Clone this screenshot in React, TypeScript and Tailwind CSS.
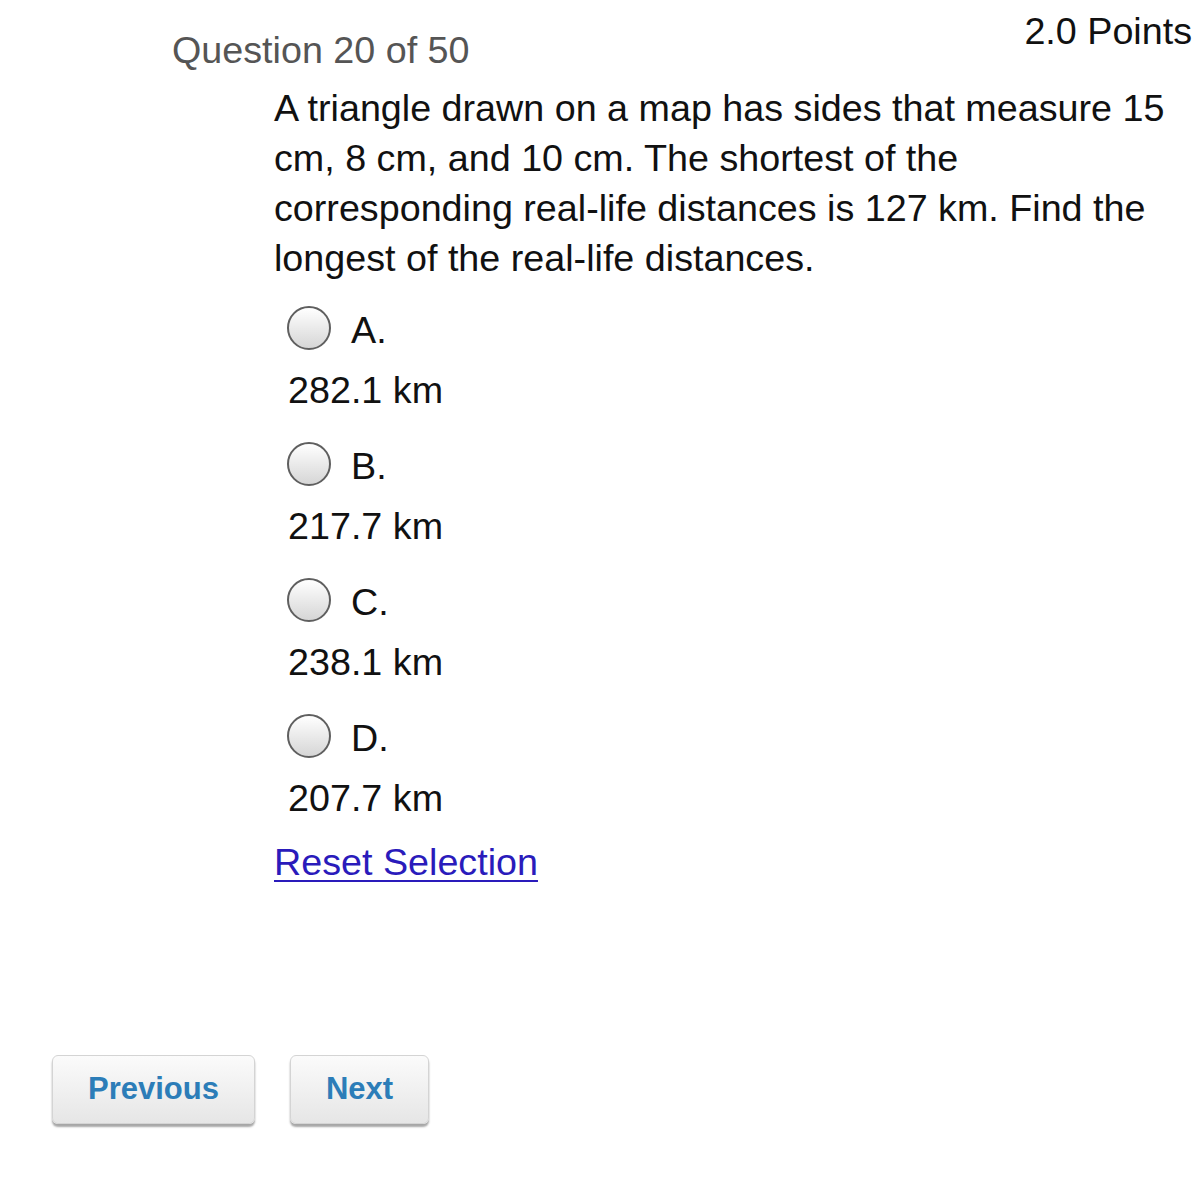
import React from "react";

const options = [
  { letter: "A.", value: "282.1 km" },
  { letter: "B.", value: "217.7 km" },
  { letter: "C.", value: "238.1 km" },
  { letter: "D.", value: "207.7 km" },
];

const Radio = () => (
  <span className="w-[44px] h-[44px] rounded-full border-2 border-[#5f5f5f] bg-gradient-to-b from-white to-[#d6d6d6] shrink-0" />
);

const NavButton = ({ label, width }: { label: string; width: string }) => (
  <button
    className={`${width} h-[69px] rounded-[6px] border border-[#d4d4d4] bg-gradient-to-b from-[#fbfbfb] to-[#e6e6e6] shadow-[0_3px_2px_rgba(0,0,0,0.35)] text-[31px] font-bold text-[#2c7db8] flex items-center justify-center`}
  >
    {label}
  </button>
);

const App = () => {
  return (
    <div
      className="w-[1198px] min-h-[1200px] bg-white text-[#111] text-[37.7px]"
      style={{ fontFamily: '"Liberation Sans", Arial, sans-serif' }}
    >
      {/* Header */}
      <div className="flex justify-between items-start">
        <div className="pl-[172px] pt-[25px] leading-[50px] text-[#555]">
          Question 20 of 50
        </div>
        <div className="pr-[6px] pt-[6px] leading-[50px]">2.0 Points</div>
      </div>

      {/* Question body */}
      <div className="pl-[274px] pr-[20px] mt-[8px]">
        <p className="leading-[50px]">
          A triangle drawn on a map has sides that measure 15 cm, 8 cm, and 10
          cm. The shortest of the corresponding real-life distances is 127 km.
          Find the longest of the real-life distances.
        </p>

        <div className="flex flex-col gap-[27px] mt-[23px] pl-[13px]">
          {options.map((o) => (
            <div key={o.letter} className="flex flex-col">
              <label className="flex items-center gap-[20px] h-[44px] leading-[44px]">
                <Radio />
                <span className="pt-[3px]">{o.letter}</span>
              </label>
              <div className="mt-[15px] leading-[50px] pl-[1px]">{o.value}</div>
            </div>
          ))}
        </div>

        <a
          href="#"
          className="inline-block mt-[14px] leading-[50px] text-[#2a1bbb] underline decoration-[2px] underline-offset-[5px]"
        >
          Reset Selection
        </a>
      </div>

      {/* Navigation */}
      <div className="flex gap-[35px] pl-[52px] mt-[164px]">
        <NavButton label="Previous" width="w-[203px]" />
        <NavButton label="Next" width="w-[139px]" />
      </div>
    </div>
  );
};

export default App;
